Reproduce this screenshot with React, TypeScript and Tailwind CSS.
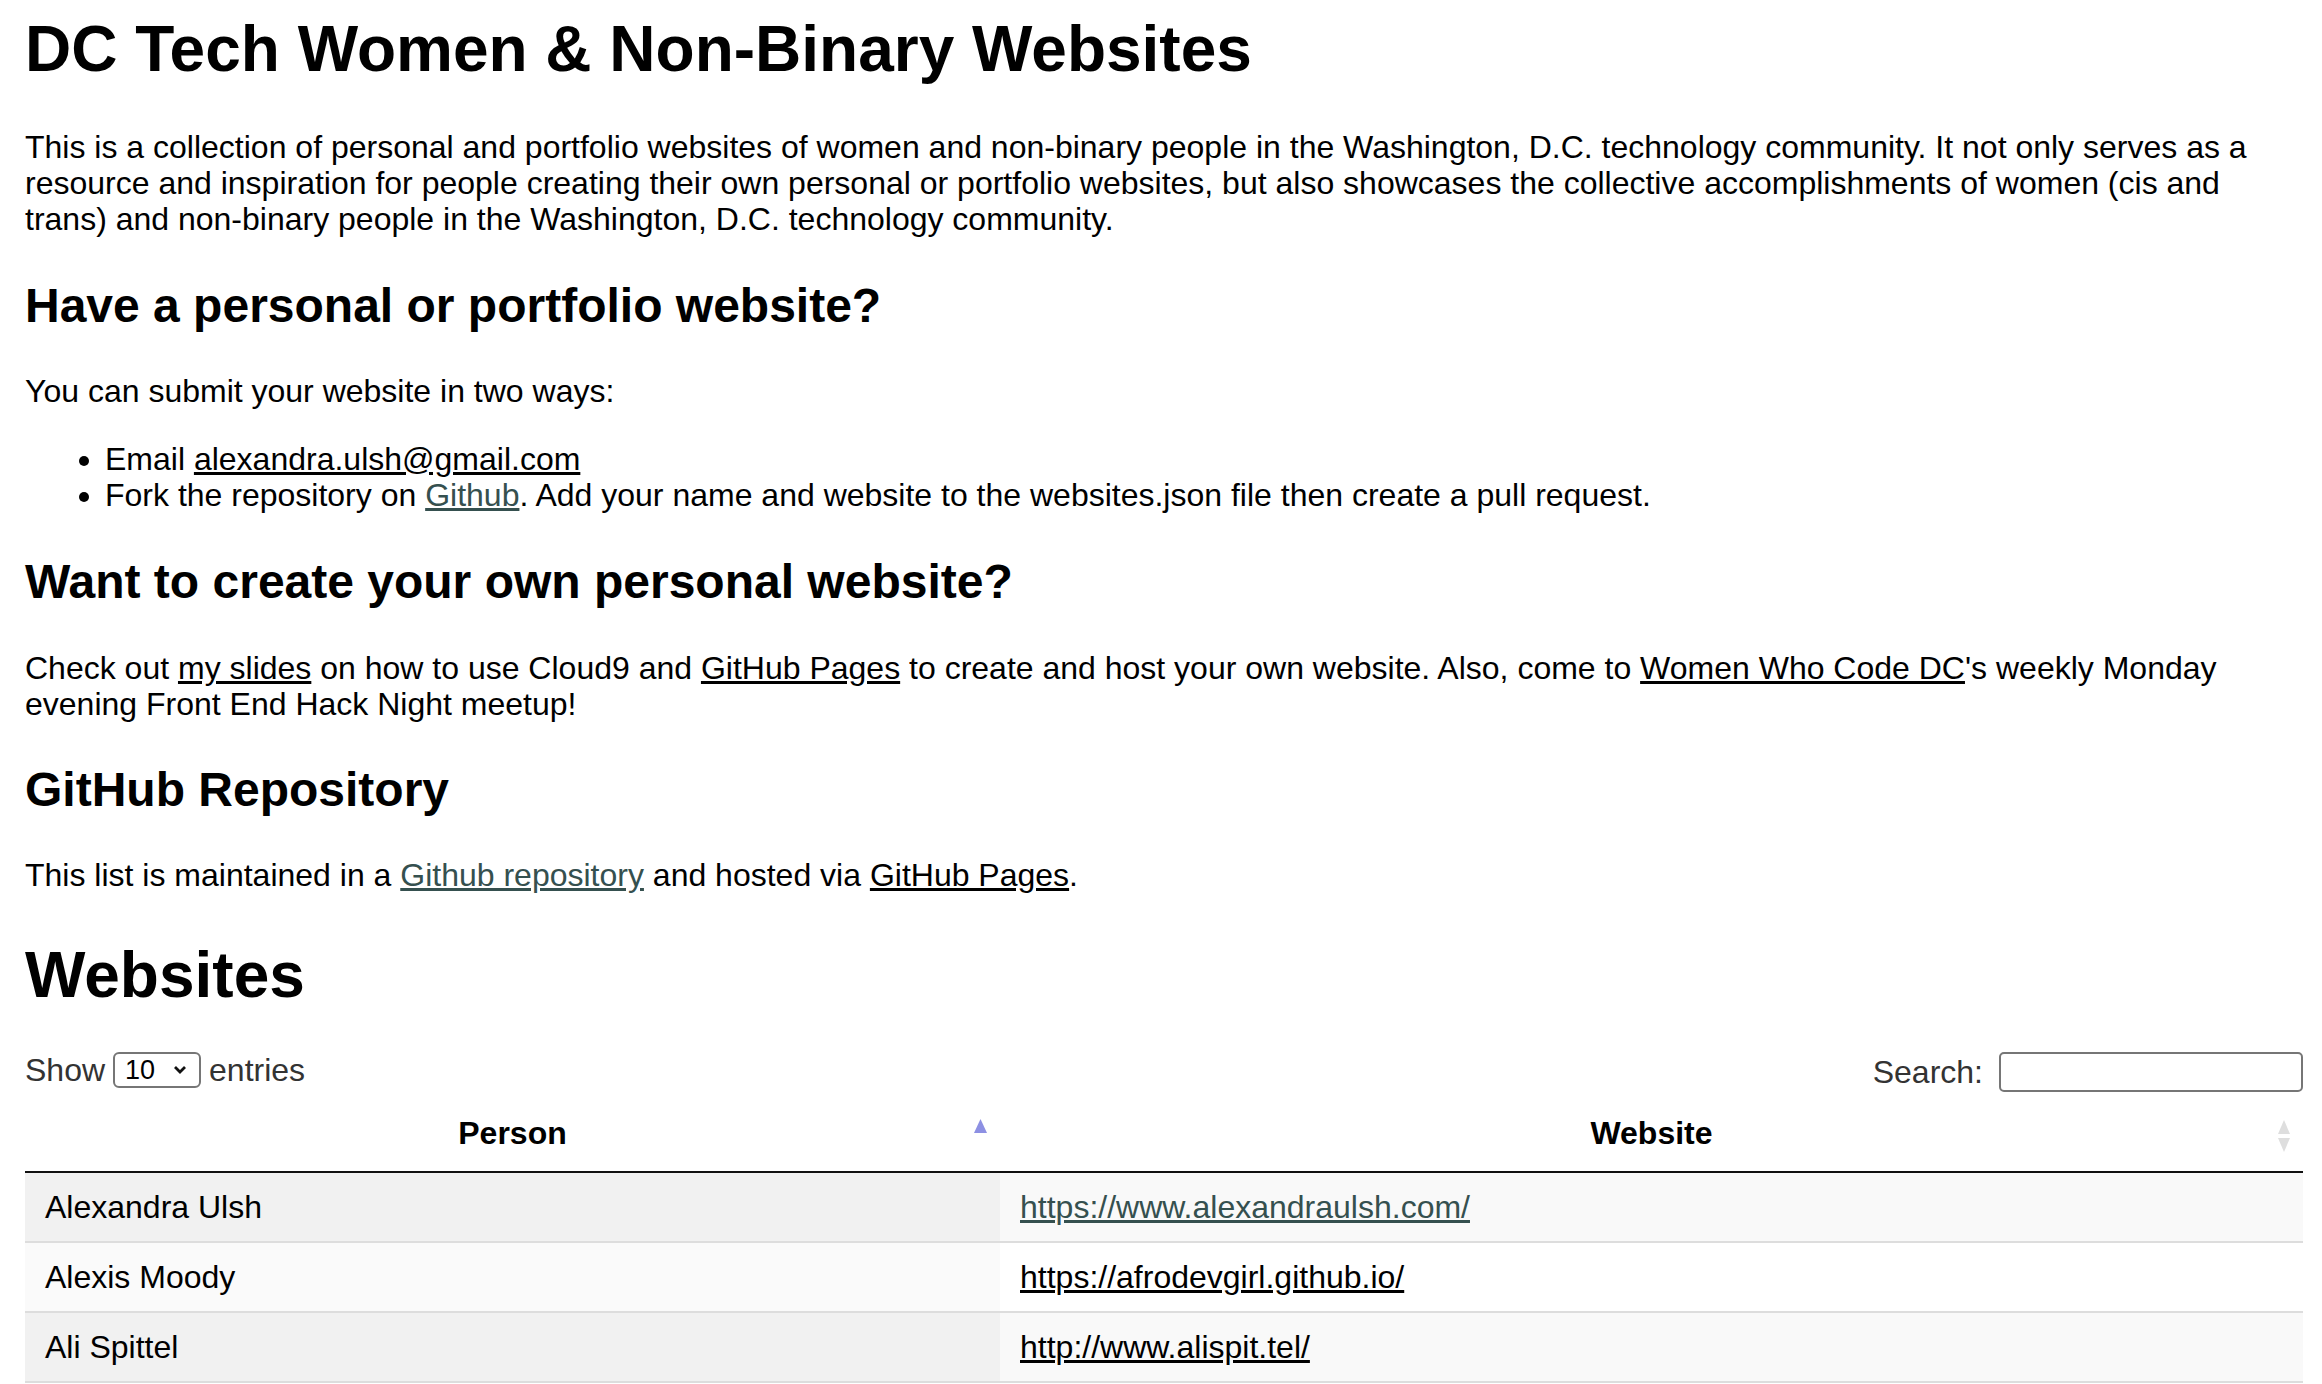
import React from "react";

const rows = [
  { name: "Alexandra Ulsh", url: "https://www.alexandraulsh.com/", visited: true },
  { name: "Alexis Moody", url: "https://afrodevgirl.github.io/", visited: false },
  { name: "Ali Spittel", url: "http://www.alispit.tel/", visited: false },
];

function SortAsc() {
  return (
    <svg width="15" height="16" viewBox="0 0 15 16" className="absolute right-[12px] top-[23px]">
      <polygon points="7.5,1 14,15 1,15" fill="#8d90e3" />
    </svg>
  );
}

function SortBoth() {
  return (
    <svg width="14" height="34" viewBox="0 0 14 34" className="absolute right-[12px] top-[24px]">
      <polygon points="7,1 13,15 1,15" fill="#dedede" />
      <polygon points="1,19 13,19 7,33" fill="#dedede" />
    </svg>
  );
}

export default function App() {
  const font = { fontFamily: '"Liberation Sans", Arial, Helvetica, sans-serif' };
  return (
    <div className="bg-white text-black pl-[25px] pr-[19px] pb-[40px] text-[32px] leading-[36px]" style={font}>
      <h1 className="text-[64px] font-bold leading-[74px] mt-[12px] mb-[43px]">
        DC Tech Women &amp; Non-Binary Websites
      </h1>
      <p className="my-[32px]">
        This is a collection of personal and portfolio websites of women and non-binary people in the Washington, D.C.
        technology community. It not only serves as a resource and inspiration for people creating their own personal or
        portfolio websites, but also showcases the collective accomplishments of women (cis and trans) and non-binary
        people in the Washington, D.C. technology community.
      </p>
      <h2 className="text-[48px] font-bold leading-[55px] mt-[41px] mb-[40px]">Have a personal or portfolio website?</h2>
      <p className="my-[32px]">You can submit your website in two ways:</p>
      <ul className="my-[32px] pl-[80px] list-disc">
        <li className="leading-[36px]">
          Email <a className="underline text-black">alexandra.ulsh@gmail.com</a>
        </li>
        <li className="leading-[36px]">
          Fork the repository on <a className="underline text-[#35504f]">Github</a>. Add your name and website to the
          websites.json file then create a pull request.
        </li>
      </ul>
      <h2 className="text-[48px] font-bold leading-[55px] mt-[41px] mb-[41px]">Want to create your own personal website?</h2>
      <p className="my-[32px]">
        Check out <a className="underline text-black">my slides</a> on how to use Cloud9 and{" "}
        <a className="underline text-black">GitHub Pages</a> to create and host your own website. Also, come to{" "}
        <a className="underline text-black">Women Who Code DC</a>'s weekly Monday evening Front End Hack Night meetup!
      </p>
      <h2 className="text-[48px] font-bold leading-[55px] mt-[40px] mb-[40px]">GitHub Repository</h2>
      <p className="my-[32px]">
        This list is maintained in a <a className="underline text-[#35504f]">Github repository</a> and hosted via{" "}
        <a className="underline text-black">GitHub Pages</a>.
      </p>
      <h1 className="text-[64px] font-bold leading-[74px] mt-[45px] mb-[39px]">Websites</h1>

      <div>
        <div className="flex justify-between items-start h-[44px]">
          <div className="flex items-center h-[37px] text-[#333]">
            <span>Show</span>
            <div className="mx-[8px] flex items-center justify-between w-[88px] h-[36px] border-2 border-[#767676] rounded-[6px] pl-[10px] pr-[12px] text-black text-[27px]">
              <span>10</span>
              <svg width="14" height="10" viewBox="0 0 14 10">
                <polyline points="2,2 7,7 12,2" fill="none" stroke="#111" strokeWidth="2.8" />
              </svg>
            </div>
            <span>entries</span>
          </div>
          <div className="flex items-center h-[41px] text-[#333]">
            <span>Search:</span>
            <div className="ml-[16px] w-[304px] h-[40px] border-2 border-[#767676] rounded-[5px] bg-white" />
          </div>
        </div>

        <table className="w-full border-collapse">
          <thead>
            <tr>
              <th className="relative w-[975px] px-[36px] py-[20px] font-bold text-center border-b-2 border-[#111]">
                Person
                <SortAsc />
              </th>
              <th className="relative px-[36px] py-[20px] font-bold text-center border-b-2 border-[#111]">
                Website
                <SortBoth />
              </th>
            </tr>
          </thead>
          <tbody>
            {rows.map((r, i) => {
              const odd = i % 2 === 0;
              const border = i === 0 ? "" : "border-t-2 border-[#dddddd]";
              const last = i === rows.length - 1 ? "border-b-2 border-b-[#dddddd]" : "";
              return (
                <tr key={r.name}>
                  <td className={`px-[20px] py-[16px] ${border} ${last} ${odd ? "bg-[#f1f1f1]" : "bg-[#fafafa]"}`}>
                    {r.name}
                  </td>
                  <td className={`px-[20px] py-[16px] ${border} ${last} ${odd ? "bg-[#f9f9f9]" : "bg-white"}`}>
                    <a className={`underline ${r.visited ? "text-[#35504f]" : "text-black"}`}>{r.url}</a>
                  </td>
                </tr>
              );
            })}
          </tbody>
        </table>
      </div>
    </div>
  );
}
